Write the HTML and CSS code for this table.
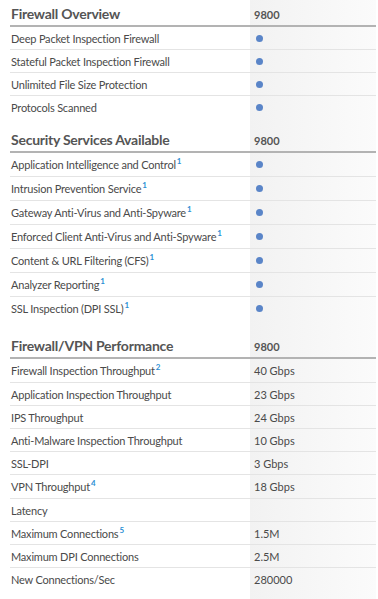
FILE: index.html
```html
<!DOCTYPE html>
<html>
<head>
<meta charset="utf-8">
<link rel="stylesheet" href="styles.css">
</head>
<body>
<div class="specs">
  <section class="group">
    <div class="row head"><div class="label">Firewall Overview</div><div class="val">9800</div></div>
    <div class="row"><div class="label">Deep Packet Inspection Firewall</div><div class="val"><span class="dot"></span></div></div>
    <div class="row"><div class="label">Stateful Packet Inspection Firewall</div><div class="val"><span class="dot"></span></div></div>
    <div class="row"><div class="label">Unlimited File Size Protection</div><div class="val"><span class="dot"></span></div></div>
    <div class="row"><div class="label">Protocols Scanned</div><div class="val"><span class="dot"></span></div></div>
  </section>
  <section class="group wide-gap">
    <div class="row head"><div class="label">Security Services Available</div><div class="val">9800</div></div>
    <div class="row tall"><div class="label">Application Intelligence and Control<sup>1</sup></div><div class="val"><span class="dot"></span></div></div>
    <div class="row tall"><div class="label">Intrusion Prevention Service<sup>1</sup></div><div class="val"><span class="dot"></span></div></div>
    <div class="row tall"><div class="label">Gateway Anti-Virus and Anti-Spyware<sup>1</sup></div><div class="val"><span class="dot"></span></div></div>
    <div class="row tall"><div class="label">Enforced Client Anti-Virus and Anti-Spyware<sup>1</sup></div><div class="val"><span class="dot"></span></div></div>
    <div class="row tall"><div class="label">Content &amp; URL Filtering (CFS)<sup>1</sup></div><div class="val"><span class="dot"></span></div></div>
    <div class="row tall"><div class="label">Analyzer Reporting<sup>1</sup></div><div class="val"><span class="dot"></span></div></div>
    <div class="row tall"><div class="label">SSL Inspection (DPI SSL)<sup>1</sup></div><div class="val"><span class="dot"></span></div></div>
  </section>
  <section class="group">
    <div class="row head"><div class="label">Firewall/VPN Performance</div><div class="val">9800</div></div>
    <div class="row tall"><div class="label">Firewall Inspection Throughput<sup>2</sup></div><div class="val">40 Gbps</div></div>
    <div class="row"><div class="label">Application Inspection Throughput</div><div class="val">23 Gbps</div></div>
    <div class="row"><div class="label">IPS Throughput</div><div class="val">24 Gbps</div></div>
    <div class="row"><div class="label">Anti-Malware Inspection Throughput</div><div class="val">10 Gbps</div></div>
    <div class="row"><div class="label">SSL-DPI</div><div class="val">3 Gbps</div></div>
    <div class="row tall"><div class="label">VPN Throughput<sup>4</sup></div><div class="val">18 Gbps</div></div>
    <div class="row"><div class="label">Latency</div><div class="val"></div></div>
    <div class="row"><div class="label">Maximum Connections<sup>5</sup></div><div class="val">1.5M</div></div>
    <div class="row"><div class="label">Maximum DPI Connections</div><div class="val">2.5M</div></div>
    <div class="row"><div class="label">New Connections/Sec</div><div class="val">280000</div></div>
  </section>
</div>
</body>
</html>
```

FILE: styles.css
```css
html, body {
  margin: 0;
  padding: 0;
  background: #ffffff;
}
body {
  font-family: Lato, "Liberation Sans", sans-serif;
  color: #4a4a4a;
  font-size: 11px;
  letter-spacing: -0.2px;
}
.specs {
  margin-left: 10px;
  width: 366px;
  min-height: 599px;
  background: linear-gradient(to right, #ffffff 0, #ffffff 240px, #f2f2f2 240px, #fbfbfb 366px);
}
.group {
  padding-bottom: 8px;
}
.group.wide-gap {
  padding-bottom: 12px;
}
.row {
  display: grid;
  grid-template-columns: 240px 1fr;
  height: 22px;
  border-bottom: 1px solid #e4e4e4;
  align-items: center;
}
.row.tall {
  height: 23px;
}
.group .row:last-child {
  border-bottom: none;
}
.label {
  padding-left: 1px;
  white-space: nowrap;
}
.val {
  padding-left: 4px;
  letter-spacing: 0;
}
.row.head {
  height: 25px;
  border-bottom: 2px solid #b3b3b3;
  align-items: start;
}
.head .label {
  font-size: 14px;
  font-weight: 700;
  color: #555;
  padding-top: 5px;
  letter-spacing: -0.25px;
}
.head .val {
  font-size: 11px;
  font-weight: 700;
  color: #555;
  padding-top: 8px;
}
sup {
  color: #2b8fd4;
  font-size: 8px;
  font-weight: 700;
  line-height: 0;
  vertical-align: 5px;
  margin-left: 1px;
}
.dot {
  display: block;
  width: 7px;
  height: 7px;
  border-radius: 50%;
  background: #5a85c8;
  margin-left: 2px;
}
```
